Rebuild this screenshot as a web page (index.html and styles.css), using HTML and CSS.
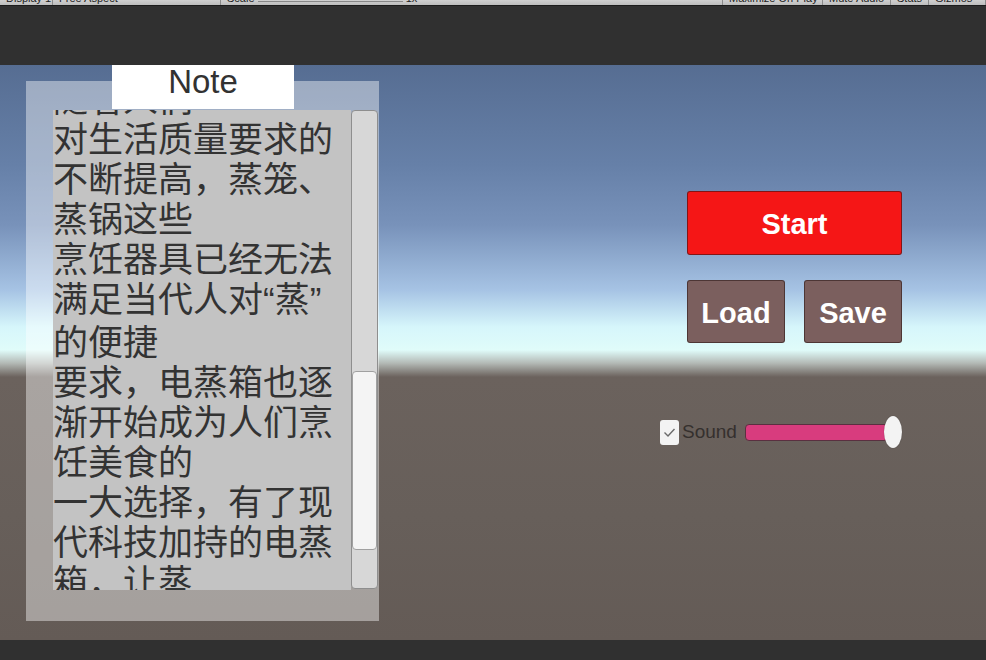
FILE: index.html
```html
<!DOCTYPE html>
<html lang="zh">
<head>
<meta charset="utf-8">
<title>Game View</title>
<link rel="stylesheet" href="styles.css">
</head>
<body>
<div class="window">
  <div class="toolbar">
    <span class="tb-item w53">Display 1</span>
    <span class="tb-item w160">Free Aspect</span>
    <span class="tb-item w500">Scale <i class="tb-slider"></i> 1x</span>
    <span class="tb-item w100">Maximize On Play</span>
    <span class="tb-item w68">Mute Audio</span>
    <span class="tb-item w53s">Stats</span>
    <span class="tb-item w31">Gizmos</span>
  </div>
  <div class="topdark"></div>
  <div class="scene">
    <div class="panel">
      <div class="note-header">Note</div>
      <div class="viewport">
        <div class="content">随着人们<br>对生活质量要求的<br>不断提高，蒸笼、<br>蒸锅这些<br>烹饪器具已经无法<br>满足当代人对<span class="q">“</span>蒸<span class="q">”</span><br>的便捷<br>要求，电蒸箱也逐<br>渐开始成为人们烹<br>饪美食的<br>一大选择，有了现<br>代科技加持的电蒸<br>箱，让蒸<br>菜变得更加简单</div>
      </div>
      <div class="scrollbar"><div class="handle"></div></div>
    </div>
    <div class="controls">
      <button class="btn btn-start">Start</button>
      <div class="btn-row">
        <button class="btn btn-small">Load</button>
        <button class="btn btn-small">Save</button>
      </div>
      <div class="sound-row">
        <span class="checkbox"><svg width="13" height="11" viewBox="0 0 13 11"><polyline points="1.5,5.5 5,9 11.5,2" fill="none" stroke="#6a6a6a" stroke-width="1.4"/></svg></span>
        <span class="sound-label">Sound</span>
        <div class="slider"><div class="slider-fill"></div><div class="slider-knob"></div></div>
      </div>
    </div>
  </div>
  <div class="bottomdark"></div>
</div>
</body>
</html>
```
FILE: styles.css
```css
html, body {
  margin: 0;
  padding: 0;
  background: #303030;
}
.window {
  width: 986px;
  height: 660px;
  display: flex;
  flex-direction: column;
  overflow: hidden;
}
.toolbar {
  height: 5px;
  background: linear-gradient(#d0d0d0, #bdbdbd);
  border-bottom: 1px solid #1c1c1c;
  display: flex;
  align-items: flex-start;
  overflow: hidden;
  font-family: "Liberation Sans", sans-serif;
  font-size: 11px;
  color: #222;
}
.tb-item {
  display: block;
  height: 12px;
  line-height: 11px;
  margin-top: -7px;
  padding-left: 6px;
  border-right: 1px solid #8a8a8a;
  white-space: nowrap;
  box-sizing: border-box;
  overflow: hidden;
}
.w53 { width: 53px; }
.w160 { width: 168px; }
.w500 { width: 502px; }
.w100 { width: 100px; }
.w68 { width: 68px; }
.w53s { width: 38px; }
.w31 { width: 57px; }
.tb-slider {
  display: inline-block;
  width: 145px;
  height: 1px;
  background: #888;
}
.topdark {
  height: 59px;
  background: #303030;
}
.scene {
  height: 575px;
  display: flex;
  align-items: flex-start;
  background: linear-gradient(180deg,
    #566d92 0px,
    #6680a8 100px,
    #7892ba 160px,
    #a6c3e4 225px,
    #d6f6fb 262px,
    #e0fcfa 285px,
    #b4bab6 298px,
    #6b625d 312px,
    #675f5a 450px,
    #645b56 575px);
}
.bottomdark {
  height: 20px;
  background: #303030;
}
.panel {
  position: relative;
  margin-left: 26px;
  margin-top: 16px;
  width: 353px;
  height: 540px;
  box-sizing: border-box;
  padding: 29px 1px 0 27px;
  background: rgba(255, 255, 255, 0.42);
  display: flex;
  align-items: flex-start;
}
.note-header {
  position: absolute;
  top: -16px;
  left: 86px;
  width: 182px;
  height: 44px;
  background: #ffffff;
  text-align: center;
  font-family: "Liberation Sans", Arial, sans-serif;
  font-size: 33px;
  line-height: 34px;
  color: #323232;
}
.viewport {
  width: 298px;
  height: 480px;
  background: #c3c3c3;
  overflow: hidden;
}
.content {
  margin-top: -33px;
  font-family: "Noto Sans CJK SC", sans-serif;
  font-size: 35px;
  line-height: 40px;
  color: #333333;
  white-space: nowrap;
}
.q {
  font-family: "Liberation Sans", Arial, sans-serif;
}
.scrollbar {
  width: 27px;
  height: 479px;
  box-sizing: border-box;
  background: #d7d7d7;
  border: 1px solid #8e8e8e;
  border-radius: 4px;
  display: flex;
  flex-direction: column;
}
.handle {
  margin-top: 260px;
  height: 179px;
  box-sizing: border-box;
  background: #f4f4f4;
  border: 1px solid #a0a0a0;
  border-radius: 4px;
}
.controls {
  margin-left: 308px;
  margin-top: 126px;
  width: 215px;
  display: flex;
  flex-direction: column;
}
.btn {
  font-family: "Liberation Sans", Arial, sans-serif;
  font-weight: bold;
  font-size: 29px;
  color: #ffffff;
  border: 1px solid rgba(40, 20, 20, 0.55);
  border-radius: 3px;
  padding: 3px 0 0 0;
  margin: 0;
}
.btn-start {
  height: 64px;
  width: 215px;
  background: #f51616;
}
.btn-row {
  margin-top: 25px;
  display: flex;
  justify-content: space-between;
}
.btn-small {
  width: 98px;
  height: 63px;
  background: #7b5f5e;
}
.sound-row {
  margin-top: 73px;
  margin-left: -27px;
  display: flex;
  align-items: center;
  height: 32px;
}
.checkbox {
  width: 19px;
  height: 25px;
  box-sizing: border-box;
  background: #f3f3f3;
  border-radius: 3px;
  display: flex;
  align-items: center;
  justify-content: center;
}
.sound-label {
  margin-left: 3px;
  font-family: "Liberation Sans", Arial, sans-serif;
  font-size: 19px;
  color: #35302e;
}
.slider {
  position: relative;
  margin-left: 8px;
  width: 156px;
  height: 32px;
  display: flex;
  align-items: center;
}
.slider-fill {
  width: 143px;
  height: 17px;
  box-sizing: border-box;
  background: #d83c7e;
  border: 1px solid #5a3040;
  border-radius: 4px;
}
.slider-knob {
  position: absolute;
  left: 139px;
  top: 0;
  width: 18px;
  height: 32px;
  border-radius: 50%;
  background: #f3f3f3;
  box-shadow: 0 0 1px rgba(0,0,0,0.4);
}
```
